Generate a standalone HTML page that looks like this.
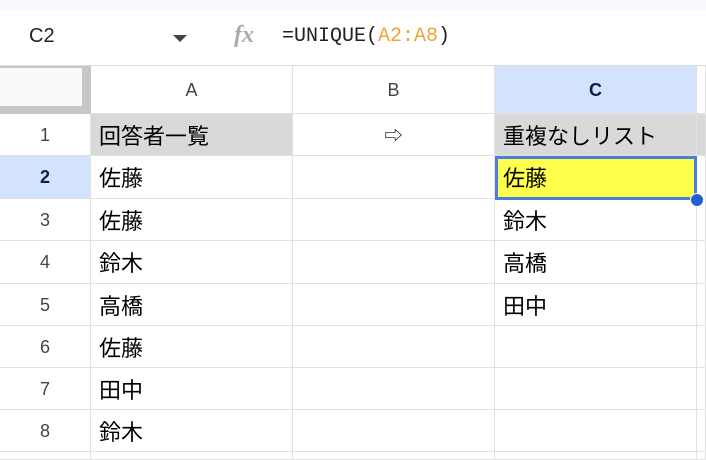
<!DOCTYPE html><html><head><style>
html,body{margin:0;width:706px;height:460px;overflow:hidden;background:#fff;font-family:"Liberation Sans","Noto Sans CJK JP",sans-serif}
#w{position:relative;width:706px;height:460px;overflow:hidden}
.a{position:absolute;box-sizing:border-box}
.h{border-right:1px solid #e1e1e1;border-bottom:1px solid #e1e1e1;text-align:center;color:#444;font-size:18px}
.c{border-right:1px solid #e1e1e1;border-bottom:1px solid #e1e1e1;font-size:22px;color:#000;padding-left:8px;font-family:"Noto Sans CJK JP",sans-serif}
</style></head><body><div id="w">
<div class="a" style="left:0;top:0;width:706px;height:10px;background:#f8f9fd"></div>
<div class="a" style="left:0;top:10px;width:706px;height:56px;border-bottom:1px solid #dadce0"></div>
<div class="a" style="left:29px;top:25px;font-size:20px;color:#222">C2</div>
<div class="a" style="left:173px;top:35px;width:0;height:0;border-left:7px solid transparent;border-right:7px solid transparent;border-top:7px solid #444"></div>
<div class="a" style="left:234px;top:22px;font-size:24px;color:#aaa;font-style:italic;font-family:'Liberation Serif',serif;font-weight:bold">fx</div>
<div class="a" style="left:282px;top:25px;font-size:20px;color:#222;font-family:'Liberation Mono',monospace">=UNIQUE(<span style="color:#f0a33a">A2:A8</span>)</div>
<div class="a" style="left:0;top:66px;width:91px;height:48px;background:#c7c7c7"></div>
<div class="a" style="left:0;top:68px;width:82px;height:38px;background:#f8f9fa"></div>
<div class="a h" style="left:91px;top:66px;width:202px;height:48px;line-height:48px">A</div>
<div class="a h" style="left:293px;top:66px;width:202px;height:48px;line-height:48px">B</div>
<div class="a h" style="left:495px;top:66px;width:202px;height:48px;line-height:48px;background:#d3e3fd;color:#0b1f4b;font-weight:bold">C</div>
<div class="a h" style="left:697px;top:66px;width:9px;height:48px"></div>
<div id="g"></div>
</div>
<script>
var rows=[["回答者一覧","⇨","重複なしリスト"],["佐藤","","佐藤"],["佐藤","","鈴木"],["鈴木","","高橋"],["高橋","","田中"],["佐藤","",""],["田中","",""],["鈴木","",""],["","",""]];
var ys=[114,156,199,241,284,326,368,410,452,460];var h="";
for(var i=0;i<rows.length;i++){var y=ys[i],hh=ys[i+1]-y;
h+='<div class="a h" style="left:0;top:'+y+'px;width:91px;height:'+hh+'px;line-height:'+hh+'px;overflow:hidden;'+(i==1?'background:#d3e3fd;color:#0b1f4b;font-weight:bold':'')+'">'+(i<8?i+1:'')+'</div>';
var xs=[91,293,495,697];
for(var j=0;j<4;j++){var t=j<3?rows[i][j]:"";var bg=(i==0&&j!=1)?'background:#d9d9d9;':'';if(i==1&&j==2)bg='background:#ffff4d;';
h+='<div class="a c" style="left:'+xs[j]+'px;top:'+y+'px;width:'+(j<3?202:9)+'px;height:'+hh+'px;line-height:'+hh+'px;overflow:hidden;'+bg+(j==1?'text-align:center;padding:0;font-size:18px':'')+'">'+t+'</div>';}}
h+='<div class="a" style="left:495px;top:156px;width:202px;height:44px;border:3px solid #4a7de0"></div>';
h+='<div class="a" style="left:690px;top:193px;width:14px;height:14px;border-radius:50%;background:#1f5fd0;border:1px solid #fff"></div>';
document.getElementById("g").innerHTML=h;
</script>
</body></html>
